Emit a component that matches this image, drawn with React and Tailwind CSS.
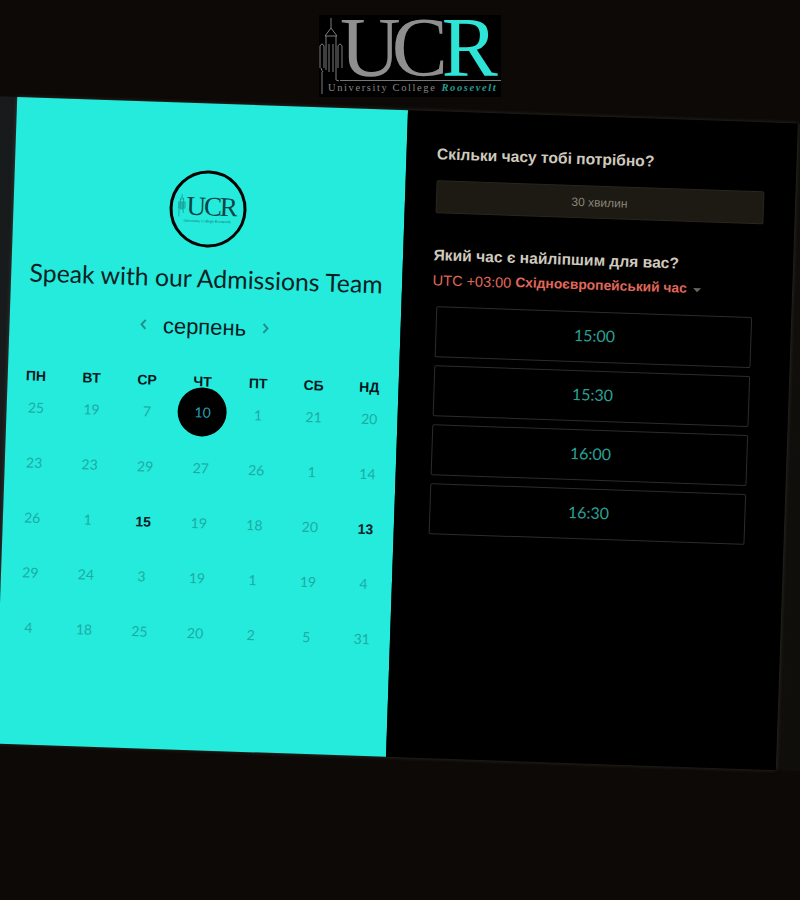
const WEEK = ["ПН", "ВТ", "СР", "ЧТ", "ПТ", "СБ", "НД"];

const DAYS = [
  [25, 19, 7, 10, 1, 21, 20],
  [23, 23, 29, 27, 26, 1, 14],
  [26, 1, 15, 19, 18, 20, 13],
  [29, 24, 3, 19, 1, 19, 4],
  [4, 18, 25, 20, 2, 5, 31],
];

const SLOTS = ["15:00", "15:30", "16:00", "16:30"];

function Tower({ className, stroke, width = 1 }) {
  return (
    <svg viewBox="0 0 26 80" className={className} fill="none" stroke={stroke} strokeWidth={width}>
      <path d="M12 0v10M12 10L6 18M12 10l6 8M6 18h12M7 18v34M17 18v34M10 26v28M14 26v28M1 50V28q2-4 4 0v22M19 50V28q2-4 4 0v22M2 50q1 3 2 4M3 54v22M17 52v10l3 1" />
    </svg>
  );
}

function Chevron({ dir }) {
  return (
    <svg viewBox="0 0 10 12" className="w-[10px] h-[12px]" fill="none" stroke="#1f8f8c" strokeWidth="2">
      <path d={dir === "left" ? "M7 1.5L3 6l4 4.5" : "M3 1.5L7 6l-4 4.5"} />
    </svg>
  );
}

function Logo() {
  return (
    <div className="bg-black w-[182px] h-[82px] mt-[15px] ml-[20px] flex flex-col shrink-0">
      <div className="flex h-[62px]">
        <Tower className="w-[26px] h-[80px] shrink-0 mt-[3px]" stroke="#7d7d7d" />
        <span className="font-['Liberation_Serif',serif] text-[84px] leading-[66px] tracking-[-9px] text-[#8f8f8f] h-[62px] -ml-[5px] whitespace-nowrap">
          UC<span className="text-[#2de4d6] ml-[3px]">R</span>
        </span>
      </div>
      <div className="h-px bg-[#777] ml-[21px] mt-[3px]" />
      <div className="flex items-center ml-[9px] mt-[1px] gap-[5px] font-['Liberation_Serif',serif] text-[10.5px] leading-[12px] whitespace-nowrap">
        <span className="text-[#858585] tracking-[1.6px]">University College</span>
        <span className="text-[#279b92] italic font-bold tracking-[1.6px]">Roosevelt</span>
      </div>
    </div>
  );
}

function SmallLogo() {
  return (
    <div className="w-[77px] h-[77px] rounded-full border-[3px] border-black flex flex-col items-center justify-center ml-[156px]">
      <div className="flex items-end h-[24px] -ml-[2px]">
        <Tower className="w-[9px] h-[24px]" stroke="#17857e" width={2} />
        <span className="font-['Liberation_Serif',serif] text-[27px] leading-[24px] tracking-[-2.2px] text-[#0b4446]">UCR</span>
      </div>
      <span className="font-['Liberation_Serif',serif] text-[4px] leading-[5px] text-[#11605c] whitespace-nowrap">University College Roosevelt</span>
    </div>
  );
}

export default function App() {
  return (
    <div className="w-[800px] h-[900px] overflow-hidden bg-[#0c0906] flex flex-col items-center">
      <Logo />
      <div className="w-[880px] h-[647px] mt-[13px] ml-[-8px] rotate-[1.95deg] shrink-0 flex justify-center bg-gradient-to-r from-[#181b1c] to-[#100e0a]">
        <div className="flex w-[781px] h-[647px] shadow-[0_0_4px_rgba(120,120,110,0.35)] rounded-[2px]">
          <div className="w-[391px] bg-[#24ebdc] flex flex-col pt-[67px]">
            <SmallLogo />
            <h1 className="font-['Lato',sans-serif] text-[24.8px] leading-[32px] text-center text-[#0a1f24] mt-[15px]">
              Speak with our Admissions Team
            </h1>
            <div className="flex items-center justify-center mt-[18px] h-[28px]">
              <Chevron dir="left" />
              <span className="font-['Liberation_Sans',sans-serif] text-[22px] text-[#0a1a1f] mx-[14px]">серпень</span>
              <Chevron dir="right" />
            </div>
            <div className="grid grid-cols-7 px-[1px] mt-[32px]">
              {WEEK.map((d) => (
                <div key={d} className="h-[18px] text-center font-['Liberation_Sans',sans-serif] font-bold text-[14px] leading-[18px] text-[#07181c]">
                  {d}
                </div>
              ))}
            </div>
            <div className="grid grid-cols-7 pl-[2px] pr-[0px]">
              {DAYS.flat().map((n, i) => {
                if (i === 3) {
                  return (
                    <div key={i} className="h-[55px] flex justify-center">
                      <div className="w-[49px] h-[49px] -mt-[3px] rounded-full bg-black flex items-center justify-center text-[#2b9fb0] text-[14px] font-['Lato',sans-serif]">
                        {n}
                      </div>
                    </div>
                  );
                }
                const bold = i === 16 || i === 20;
                return (
                  <div key={i} className={`h-[55px] pt-[14px] text-center text-[14px] leading-[18px] ${bold ? "font-['Liberation_Sans',sans-serif] font-bold text-[#0a1d2a]" : "font-['Lato',sans-serif] text-[#1caca4]"}`}>
                    {n}
                  </div>
                );
              })}
            </div>
          </div>
          <div className="flex-1 bg-black pl-[31px] pt-[33px] font-['Liberation_Sans',sans-serif]">
            <h2 className="font-bold text-[15.6px] leading-[20px] text-[#cfc9be]">Скільки часу тобі потрібно?</h2>
            <div className="mt-[16px] h-[33px] w-[328px] rounded-[2px] bg-[#1d1913] border border-[#2a2620] flex items-center justify-center text-[12px] text-[#8a857b]">
              30 хвилин
            </div>
            <h2 className="font-bold text-[15.6px] leading-[20px] text-[#cfc9be] mt-[32px]">Який час є найліпшим для вас?</h2>
            <div className="flex items-center mt-[6px] text-[14.5px] leading-[18px] text-[#e0685a] whitespace-nowrap">
              <span>UTC +03:00</span>
              <span className="font-bold text-[13.8px] ml-[4px]">Східноєвропейський час</span>
              <span className="ml-[6px] mt-[2px] border-x-[4px] border-x-transparent border-t-[4px] border-t-[#6b665f]" />
            </div>
            <div className="flex flex-col gap-[8px] mt-[17px] ml-[4px] w-[316px]">
              {SLOTS.map((t) => (
                <div key={t} className="h-[51px] pb-[3px] pl-[3px] rounded-[2px] border border-[#2c2c2c] flex items-center justify-center font-['Lato',sans-serif] text-[16px] text-[#2aa096]">
                  {t}
                </div>
              ))}
            </div>
          </div>
        </div>
      </div>
    </div>
  );
}
